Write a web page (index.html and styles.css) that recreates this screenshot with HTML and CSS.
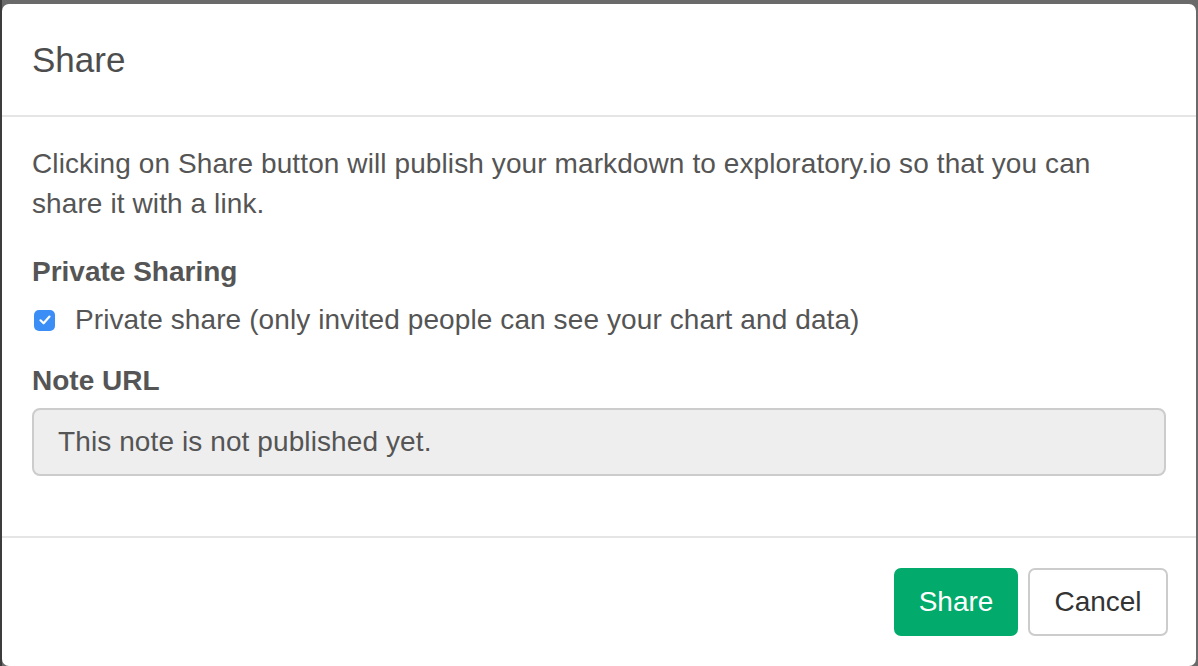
FILE: index.html
```html
<!DOCTYPE html>
<html>
<head>
<meta charset="utf-8">
<link rel="stylesheet" href="styles.css">
</head>
<body>
<div class="backdrop">
  <div class="modal">
    <div class="modal-header">
      <h4 class="modal-title">Share</h4>
    </div>
    <div class="modal-body">
      <p class="intro">Clicking on Share button will publish your markdown to exploratory.io so that you can share it with a link.</p>
      <div class="form-group">
        <div class="label label-first">Private Sharing</div>
        <label class="check-row">
          <span class="checkbox">
            <svg width="14" height="14" viewBox="0 0 14 14"><path d="M2.5 7.3 L5.6 10.3 L11.5 3.6" fill="none" stroke="#fff" stroke-width="2.2" stroke-linecap="round" stroke-linejoin="round"/></svg>
          </span>
          <span>Private share (only invited people can see your chart and data)</span>
        </label>
      </div>
      <div class="form-group">
        <div class="label label-url">Note URL</div>
        <div class="input">This note is not published yet.</div>
      </div>
    </div>
    <div class="modal-footer">
      <button class="btn btn-share">Share</button>
      <button class="btn btn-cancel">Cancel</button>
    </div>
  </div>
</div>
</body>
</html>
```

FILE: styles.css
```css
html, body {
  margin: 0;
  padding: 0;
  height: 100%;
}
body {
  background: #6a6a6a;
  font-family: "Liberation Sans", Arial, sans-serif;
  color: #555;
  overflow: hidden;
}
.backdrop {
  height: 100%;
  box-sizing: border-box;
  padding: 4px 2px 0 2px;
  background: linear-gradient(to right, #3c3c3c 0, #3c3c3c 2px, #6a6a6a 2px);
}
.modal {
  background: #fff;
  height: 662px;
  border-radius: 7px;
  display: flex;
  flex-direction: column;
  overflow: hidden;
}
.modal-header {
  padding: 30px;
  border-bottom: 2px solid #e5e5e5;
}
.modal-title {
  margin: 0;
  font-size: 35px;
  line-height: 51px;
  font-weight: normal;
  color: #4d4d4d;
}
.modal-body {
  padding: 27px 30px 30px 30px;
  flex: 1;
  font-size: 28px;
  line-height: 40px;
  letter-spacing: 0.1px;
}
.intro {
  margin: 0 0 28px 0;
}
.form-group {
  margin-bottom: 21px;
}
.label {
  font-weight: bold;
  letter-spacing: 0;
}
.label-first {
  margin-bottom: 8px;
}
.label-url {
  margin-bottom: 7px;
}
.check-row {
  display: flex;
  align-items: center;
  gap: 20px;
}
.checkbox {
  width: 21px;
  height: 21px;
  margin-left: 2px;
  border-radius: 5px;
  background: #3a8ef6;
  display: flex;
  align-items: center;
  justify-content: center;
}
.input {
  height: 64px;
  border: 2px solid #ccc;
  border-radius: 8px;
  background: #eee;
  padding: 0 24px;
  display: flex;
  align-items: center;
  color: #555;
}
.modal-footer {
  border-top: 2px solid #e5e5e5;
  padding: 30px 28px 30px 30px;
  display: flex;
  justify-content: flex-end;
  gap: 10px;
}
.btn {
  font-family: inherit;
  font-size: 28px;
  height: 68px;
  border-radius: 7px;
  cursor: pointer;
}
.btn-share {
  width: 124px;
  background: #02ab6b;
  border: 2px solid #02ab6b;
  color: #fff;
}
.btn-cancel {
  width: 140px;
  background: #fff;
  border: 2px solid #ccc;
  color: #333;
}
```
